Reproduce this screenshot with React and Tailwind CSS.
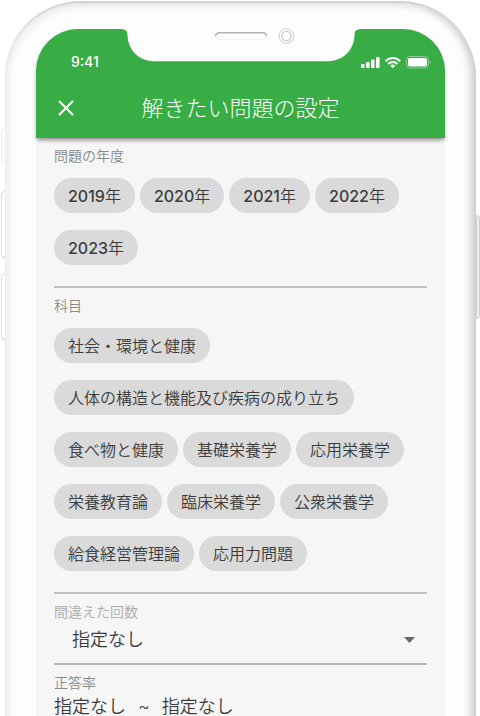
import React from "react";

const YEARS = ["2019", "2020", "2021", "2022", "2023"];

const SUBJECTS = [
  "社会・環境と健康",
  "人体の構造と機能及び疾病の成り立ち",
  "食べ物と健康",
  "基礎栄養学",
  "応用栄養学",
  "栄養教育論",
  "臨床栄養学",
  "公衆栄養学",
  "給食経営管理論",
  "応用力問題",
];

const Chip = ({ children }) => (
  <button
    type="button"
    className="h-[35px] rounded-full bg-[#dadada] px-[14px] text-base leading-none font-[350] whitespace-nowrap text-[#3c3c3c]"
  >
    {children}
  </button>
);

const ChipSection = ({ title, children }) => (
  <section className="border-b-2 border-[#c0c0c0] pb-[21px]">
    <h2 className="text-sm leading-5 text-[#8a8a8a]">{title}</h2>
    <div className="mt-3 flex flex-wrap gap-x-[5px] gap-y-[17px]">
      {children}
    </div>
  </section>
);

const StatusIcons = () => (
  <svg width="70" height="14" viewBox="0 0 70 14" fill="none" aria-hidden="true">
    {/* Signal */}
    <g fill="#fff">
      <rect x="0" y="9" width="3.6" height="4" rx="1" />
      <rect x="5" y="7" width="3.6" height="6" rx="1" />
      <rect x="10" y="4.5" width="3.6" height="8.5" rx="1" />
      <rect x="15" y="2" width="3.6" height="11" rx="1" />
    </g>
    {/* Wifi */}
    <g stroke="#fff" strokeWidth="2.1">
      <path d="M24.4 6.2a10.2 10.2 0 0 1 14.8 0" />
      <path d="M27.2 9a6.3 6.3 0 0 1 9.2 0" />
    </g>
    <path d="M29.3 10.7a3.7 3.7 0 0 1 5 0L31.8 13.3z" fill="#fff" />
    {/* Battery */}
    <rect x="45.5" y="1.5" width="22" height="11.5" rx="3.2" stroke="#fff" strokeOpacity="0.4" />
    <rect x="47" y="3" width="19" height="8.5" rx="1.8" fill="#fff" />
    <path d="M68.7 5.4c1.3.5 1.3 3.2 0 3.7z" fill="#fff" fillOpacity="0.4" />
  </svg>
);

const Notch = () => (
  <svg
    className="absolute top-0 left-1/2 -translate-x-1/2"
    width="241"
    height="33"
    viewBox="0 0 241 33"
    fill="none"
    overflow="visible"
    aria-hidden="true"
  >
    <path
      d="M2 -1V0.5C5.5 0.5 7 2 7 6C7.5 21 18 32.3 35 32.3H206C223 32.3 233.5 21 234 6C234 2 235.5 0.5 239 0.5V-1Z"
      fill="#fdfdfd"
    />
    {/* Speaker */}
    <path d="M95 7.5C95 4.8 97 3.8 99 3.8H142C144 3.8 146 4.8 146 7.5" stroke="#b0b0b0" strokeWidth="1.4" />
    <path d="M95 7.5C95 9.5 97 10.5 99 10.5H142C144 10.5 146 9.5 146 7.5" stroke="#f2f2f2" />
    {/* Camera */}
    <circle cx="166" cy="7" r="7.4" stroke="#cbcbcb" />
    <circle cx="166" cy="7" r="4.6" stroke="#c4c4c4" strokeWidth="1.2" />
  </svg>
);

const App = () => {
  return (
    <div
      lang="ja"
      className="h-screen overflow-hidden bg-white font-['Inter','Noto_Sans_CJK_JP',sans-serif]"
    >
      {/* Phone body */}
      <div className="relative mt-px mr-1 ml-[5px] rounded-t-[76px] border-t-2 border-[#d2d2d2] bg-[#fdfdfd] px-[31px] pt-[26px] shadow-[inset_-8px_0_10px_-4px_#c4c4c4,inset_3px_3px_10px_-2px_#e2e2e2]">
        {/* Side buttons */}
        <span className="absolute top-[125px] -left-1 h-9 w-1 rounded-l-sm border border-r-0 border-[#ececec]" />
        <span className="absolute top-[188px] -left-1 h-[67px] w-1 rounded-l-sm border border-r-0 border-[#e0e0e0] border-b-[#c4c4c4]" />
        <span className="absolute top-[270px] -left-1 h-[67px] w-1 rounded-l-sm border border-r-0 border-[#e0e0e0] border-b-[#c4c4c4]" />
        <span className="absolute top-[212px] -right-1 h-[104px] w-1 rounded-r-sm border border-[#d0d0d0] bg-[#f0f0f0]" />

        {/* Screen */}
        <div className="relative rounded-t-[42px] bg-[#f6f6f6]">
          <header className="relative rounded-t-[42px] bg-[#38ac45] text-white shadow-[0_3px_4px_-1px_rgba(0,0,0,0.45)]">
            <Notch />
            <div className="flex items-center justify-between pt-[25px] pr-[14px] pl-[35px]">
              <span className="text-sm leading-4 font-medium">9:41</span>
              <StatusIcons />
            </div>
            <div className="grid grid-cols-[60px_1fr_60px] items-center pt-5 pb-3">
              <button type="button" aria-label="閉じる" className="justify-self-center">
                <svg width="16" height="16" viewBox="0 0 16 16" fill="none">
                  <path d="M1 1L15 15M15 1L1 15" stroke="#fff" strokeWidth="2" />
                </svg>
              </button>
              <h1 className="text-center text-[22px] leading-9 font-light whitespace-nowrap">
                解きたい問題の設定
              </h1>
            </div>
          </header>

          <main className="px-[18px] pt-2 pb-24 font-[350]">
            <ChipSection title="問題の年度">
              {YEARS.map((year) => (
                <Chip key={year}>
                  <span className="font-medium">{year}</span>年
                </Chip>
              ))}
            </ChipSection>

            <div className="mt-2">
              <ChipSection title="科目">
                {SUBJECTS.map((subject) => (
                  <Chip key={subject}>{subject}</Chip>
                ))}
              </ChipSection>
            </div>

            {/* Wrong answer count */}
            <div className="mt-2 border-b-2 border-[#b8b8b8] pb-[9px]">
              <label htmlFor="wrong-count" className="block text-sm leading-5 text-[#ababab]">
                間違えた回数
              </label>
              <div className="relative mt-1">
                <select
                  id="wrong-count"
                  className="block w-full appearance-none bg-transparent pl-[18px] text-lg leading-7 text-[#3c3c3c]"
                >
                  <option>指定なし</option>
                </select>
                <svg
                  className="pointer-events-none absolute top-[11px] right-3"
                  width="11"
                  height="6"
                  viewBox="0 0 11 6"
                  aria-hidden="true"
                >
                  <path d="M0 0H11L5.5 6Z" fill="#666" />
                </svg>
              </div>
            </div>

            {/* Correct answer rate */}
            <div className="mt-2">
              <h2 className="text-sm leading-5 text-[#8a8a8a]">正答率</h2>
              <p className="flex gap-3 text-lg leading-7 text-[#3c3c3c]">
                <span>指定なし</span>
                <span>~</span>
                <span>指定なし</span>
              </p>
            </div>
          </main>
        </div>
      </div>
    </div>
  );
};

export default App;
